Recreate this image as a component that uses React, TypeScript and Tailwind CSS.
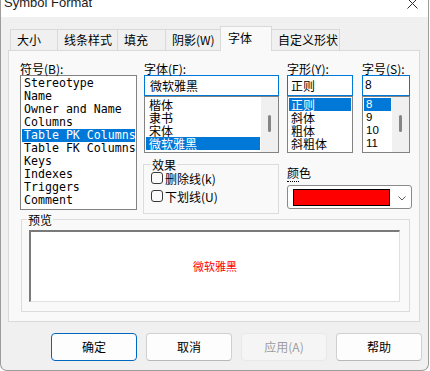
const symbols = [
  "Stereotype",
  "Name",
  "Owner and Name",
  "Columns",
  "Table PK Columns",
  "Table FK Columns",
  "Keys",
  "Indexes",
  "Triggers",
  "Comment",
];

const fonts = ["楷体", "隶书", "宋体", "微软雅黑"];
const styles = ["正则", "斜体", "粗体", "斜粗体"];
const sizes = ["8", "9", "10", "11"];

const tabs = [
  { label: "大小", w: "w-[48px]", active: false },
  { label: "线条样式", w: "w-[61px]", active: false },
  { label: "填充", w: "w-[49px]", active: false },
  { label: "阴影(W)", w: "w-[56px]", active: false },
  { label: "字体", w: "w-[52px]", active: true },
  { label: "自定义形状", w: "w-[69px]", active: false },
];

function Scrollbar() {
  return (
    <div className="w-[17px] h-full bg-[#f0f0f0] flex justify-center shrink-0">
      <div className="mt-[18px] ml-[-1px] w-[3px] h-[17px] rounded-full bg-[#858585]" />
    </div>
  );
}

function Checkbox({ label }: { label: string }) {
  return (
    <div className="h-[14px] flex items-center gap-[2px]">
      <div className="w-[12px] h-[12px] rounded-[3px] border border-[#3a3a3a] bg-[#fbfbfb]" />
      <span className="leading-[13px]">{label}</span>
    </div>
  );
}

export default function App() {
  return (
    <div className="w-[430px] h-[371px] bg-white overflow-hidden font-['Noto_Sans_CJK_SC',sans-serif] text-[12px] text-black">
      <div className="w-[429px] h-[371px] bg-[#f0f0f0] border-x border-b border-[#9c9c9c] rounded-b-[7px] flex flex-col overflow-hidden">
        {/* title bar */}
        <div className="h-[17px] shrink-0 bg-white flex justify-between overflow-hidden">
          <span className="ml-[3px] -mt-[5px] leading-[16px] text-[13px] font-['Liberation_Sans',sans-serif] text-[#1b1b1b]">
            Symbol Format
          </span>
          <svg width="11" height="11" viewBox="0 0 11 11" className="-mt-[2px] mr-[10px]">
            <path d="M0.5 0.5 L10.5 10.5 M10.5 0.5 L0.5 10.5" stroke="#2b2b2b" strokeWidth="1" />
          </svg>
        </div>

        {/* tabs */}
        <div className="mt-[9px] h-[24px] pl-[9px] flex items-end relative z-10 shrink-0">
          {tabs.map((t, i) =>
            t.active ? (
              <div
                key={t.label}
                className={`${t.w} h-[25px] -mb-px -ml-px border-t border-x border-[#d9d9d9] bg-[#f9f9f9] pl-[7px] leading-[21px] whitespace-nowrap relative z-10`}
              >
                {t.label}
              </div>
            ) : (
              <div
                key={t.label}
                className={`${t.w} h-[21px] ${i === 0 ? "" : "-ml-px"} border-t border-x border-[#d9d9d9] bg-[#f0f0f0] pl-[6px] leading-[20px] whitespace-nowrap`}
              >
                {t.label}
              </div>
            )
          )}
        </div>

        {/* panel */}
        <div className="ml-[7px] w-[412px] h-[272px] shrink-0 border border-[#d9d9d9] bg-[#f9f9f9] pl-[11px] pt-[11px]">
          <div className="flex items-start">
            {/* symbol column */}
            <div className="w-[117px]">
              <div className="h-[13px] leading-[13px]">符号(B):</div>
              <div className="h-[135px] border border-[#828282] bg-white p-px overflow-hidden font-['DejaVu_Sans_Mono',monospace] text-[11.6px]">
                {symbols.map((s, i) => (
                  <div
                    key={s}
                    className={`h-[13px] leading-[13px] px-[2px] whitespace-nowrap overflow-hidden ${
                      i === 4 ? "bg-[#0078d7] text-white" : ""
                    }`}
                  >
                    {s}
                  </div>
                ))}
              </div>
            </div>

            {/* font column */}
            <div className="ml-[7px] w-[135px]">
              <div className="h-[13px] leading-[13px]">字体(F):</div>
              <div className="h-[21px] border border-[#0078d7] bg-white pl-[5px] leading-[19px]">微软雅黑</div>
              <div className="h-[57px] border border-[#828282] bg-white flex">
                <div className="flex-1 p-px">
                  {fonts.map((f, i) => (
                    <div
                      key={f}
                      className={`h-[13px] leading-[13px] px-[3px] ${i === 3 ? "bg-[#0078d7] text-white" : ""}`}
                    >
                      {f}
                    </div>
                  ))}
                </div>
                <Scrollbar />
              </div>

              <div className="mt-[11px] -ml-px w-[136px] h-[50px] border border-[#dcdcdc] relative pt-[6px] pl-[7px] flex flex-col gap-[4px]">
                <span className="absolute left-[7px] -top-[7px] px-px leading-[13px] bg-[#f9f9f9]">效果</span>
                <Checkbox label="删除线(k)" />
                <Checkbox label="下划线(U)" />
              </div>
            </div>

            {/* style / size / color column */}
            <div className="ml-[8px] w-[125px]">
              <div className="flex">
                <div className="w-[66px]">
                  <div className="h-[13px] leading-[13px]">字形(Y):</div>
                  <div className="h-[21px] border border-[#0078d7] bg-white pl-[3px] leading-[19px]">正则</div>
                  <div className="h-[57px] border border-[#828282] bg-white p-px">
                    {styles.map((s, i) => (
                      <div
                        key={s}
                        className={`h-[13px] leading-[13px] px-[2px] ${i === 0 ? "bg-[#0078d7] text-white" : ""}`}
                      >
                        {s}
                      </div>
                    ))}
                  </div>
                </div>
                <div className="ml-[9px] w-[48px]">
                  <div className="h-[13px] leading-[13px]">字号(S):</div>
                  <div className="h-[21px] border border-[#0078d7] bg-white pl-[2px] leading-[19px] font-['Liberation_Sans',sans-serif] text-[12px]">
                    8
                  </div>
                  <div className="h-[57px] border border-[#828282] bg-white flex">
                    <div className="flex-1 p-px font-['Liberation_Sans',sans-serif] text-[11.5px]">
                      {sizes.map((s, i) => (
                        <div
                          key={s}
                          className={`h-[13px] leading-[13px] pl-[2px] ${i === 0 ? "bg-[#0078d7] text-white" : ""}`}
                        >
                          {s}
                        </div>
                      ))}
                    </div>
                    <Scrollbar />
                  </div>
                </div>
              </div>

              <div className="mt-[13px] h-[13px] leading-[13px]">
                <span className="border-b border-dotted border-black">颜</span>色
              </div>
              <div className="mt-[6px] h-[24px] w-[125px] border border-[#8a8a8a] rounded-[3px] bg-white flex items-center pl-[5px]">
                <div className="w-[97px] h-[17px] border border-black bg-[#ff0000]" />
                <svg width="8" height="5" viewBox="0 0 8 5" className="ml-[8px] mt-[2px]">
                  <path d="M0.5 0.5 L4 4 L7.5 0.5" fill="none" stroke="#5a5a5a" strokeWidth="1" />
                </svg>
              </div>
            </div>
          </div>

          {/* preview */}
          <div className="mt-[5px] ml-px w-[389px] h-[93px] relative border border-[#dcdcdc] pt-[10px] pl-[7px]">
            <span className="absolute left-[5px] -top-[7px] px-px leading-[13px] bg-[#f9f9f9]">预览</span>
            <div className="w-[371px] h-[72px] bg-white border-t-2 border-l-2 border-t-[#7a7a7a] border-l-[#7a7a7a] border-r border-b border-r-[#e0e0e0] border-b-[#e0e0e0] flex items-center justify-center">
              <span className="text-[11px] text-[#ff0000] leading-[13px]">微软雅黑</span>
            </div>
          </div>
        </div>

        {/* buttons */}
        <div className="mt-[11px] pl-[50px] flex gap-[9px]">
          <button className="w-[86px] h-[28px] rounded-[4px] border border-[#0067c0] bg-[#fdfdfd] text-[12px]">确定</button>
          <button className="w-[86px] h-[28px] rounded-[4px] border border-[#d0d0d0] border-b-[#b8b8b8] bg-[#fdfdfd] text-[12px]">取消</button>
          <button className="w-[86px] h-[28px] rounded-[4px] border border-[#e8e8e8] bg-[#f5f5f5] text-[12px] text-[#9d9d9d]">应用(A)</button>
          <button className="w-[86px] h-[28px] rounded-[4px] border border-[#d0d0d0] border-b-[#b8b8b8] bg-[#fdfdfd] text-[12px]">帮助</button>
        </div>
      </div>
    </div>
  );
}
